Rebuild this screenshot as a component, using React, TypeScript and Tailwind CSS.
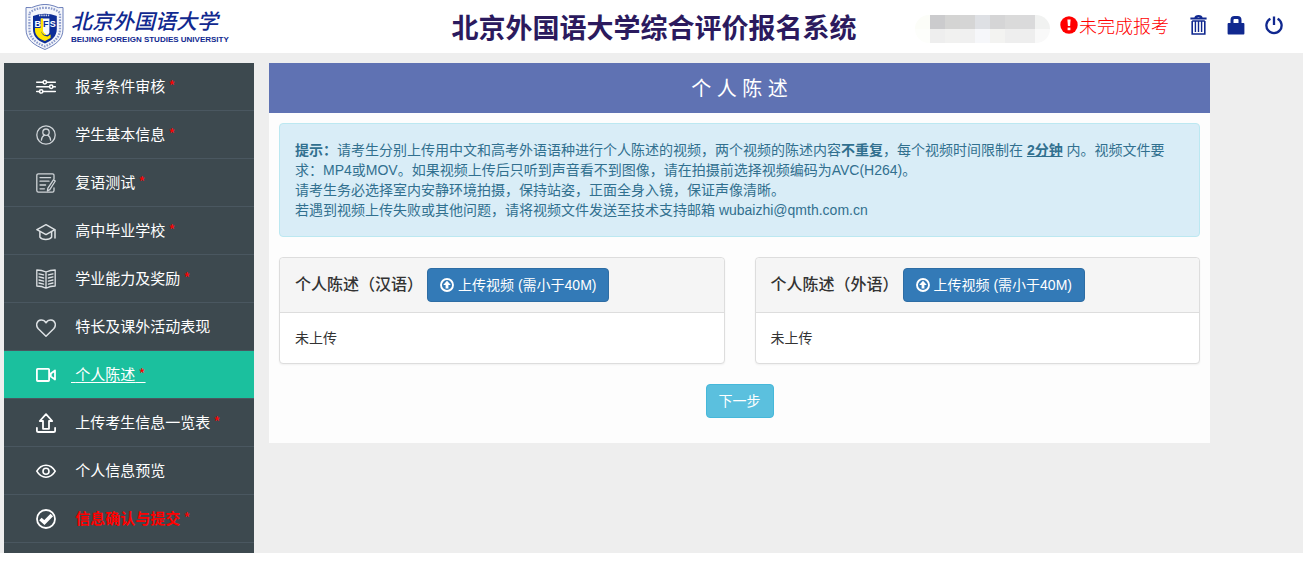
import type { ReactNode } from 'react'

interface MenuItem {
  label: string
  icon: ReactNode
  required?: boolean
  active?: boolean
  warn?: boolean
}

function MenuIcon({ children, width = 1.4, color = '#e3e6e8' }: { children: ReactNode; width?: number; color?: string }) {
  return (
    <svg
      width="20"
      height="20"
      viewBox="0 0 20 20"
      fill="none"
      stroke={color}
      strokeWidth={width}
      strokeLinecap="round"
      strokeLinejoin="round"
      className="shrink-0"
      aria-hidden="true"
    >
      {children}
    </svg>
  )
}

const menu: MenuItem[] = [
  {
    label: '报考条件审核',
    required: true,
    icon: (
      <MenuIcon width={1.5} color="#ffffff">
        <path d="M0.7 5.2H7M10.6 5.2H19.3M0.7 9.8H13.5M17 9.8H19.3M0.7 14.4H3.5M7 14.4H19.3" />
        <circle cx="8.8" cy="5.2" r="1.7" />
        <circle cx="15.2" cy="9.8" r="1.7" />
        <circle cx="5.2" cy="14.4" r="1.7" />
      </MenuIcon>
    ),
  },
  {
    label: '学生基本信息',
    required: true,
    icon: (
      <MenuIcon width={1.3} color="#cfd4d8">
        <circle cx="10" cy="10" r="9.2" />
        <circle cx="10" cy="7.2" r="3.2" />
        <path d="M5.4 15.2C5.6 12.4 7.2 10.8 8.4 10.2M14.6 15.2C14.4 12.4 12.8 10.8 11.6 10.2" />
      </MenuIcon>
    ),
  },
  {
    label: '复语测试',
    required: true,
    icon: (
      <MenuIcon width={1.3} color="#cfd4d8">
        <path d="M18 6V2.5Q18 0.9 16.4 0.9H2.4Q0.8 0.9 0.8 2.5V17.4Q0.8 19.1 2.4 19.1H16.4Q18 19.1 18 17.4V15" />
        <path d="M4 4.6H14.6M4 8.2H13M4 12H9.6M4 15.8H8.4" />
        <path d="M17.4 6.8L19.3 8L13.8 16.6L11.4 18L11.8 15.4Z" />
      </MenuIcon>
    ),
  },
  {
    label: '高中毕业学校',
    required: true,
    icon: (
      <MenuIcon width={1.5} color="#dde1e4">
        <path d="M10 3.7L0.9 8.7L10 13.6L18.8 8.7Z" />
        <path d="M3.9 10.8V16.2C6 19.4 13.6 19.4 15.6 16.2V10.8M19 9V17" />
      </MenuIcon>
    ),
  },
  {
    label: '学业能力及奖励',
    required: true,
    icon: (
      <MenuIcon width={1.3} color="#dde1e4">
        <path d="M10 3C7 1.6 3.6 1 0.8 1V17C4 17 7 17.6 10 19.2C13 17.6 16 17 19.2 17V1C16.4 1 13 1.6 10 3ZM10 3V19" />
        <path d="M3 4.8L7.6 5.9M3 7.9L7.6 9M3 11L7.6 12.1M3 14L7.6 15.1M17 4.8L12.4 5.9M17 7.9L12.4 9M17 11L12.4 12.1M17 14L12.4 15.1" />
      </MenuIcon>
    ),
  },
  {
    label: '特长及课外活动表现',
    icon: (
      <MenuIcon width={1.5} color="#dde1e4">
        <path d="M10 19.2L2.3 11.8C-0.8 8.2 0.8 3.4 5 3.1C7.4 3 9 4.2 10 5.8C11 4.2 12.6 3 15 3.1C19.2 3.4 20.8 8.2 17.7 11.8Z" />
      </MenuIcon>
    ),
  },
  {
    label: '个人陈述',
    required: true,
    active: true,
    icon: (
      <MenuIcon width={1.8} color="#ffffff">
        <rect x="0.9" y="3.8" width="12.2" height="12.2" rx="0.8" />
        <path d="M19 5.4L14.8 8.4V11.6L19 14.6Z" />
      </MenuIcon>
    ),
  },
  {
    label: '上传考生信息一览表',
    required: true,
    icon: (
      <MenuIcon width={1.8} color="#ffffff">
        <path d="M10 1.2L3.8 8H7V15.8H13V8H16.2ZM0.9 14.8V17.4Q0.9 19 2.5 19H17.5Q19.1 19 19.1 17.4V14.8" />
      </MenuIcon>
    ),
  },
  {
    label: '个人信息预览',
    icon: (
      <MenuIcon width={1.6} color="#ffffff">
        <path d="M0.8 10.2C5.4 2.2 14.6 2.2 19.2 10.2C14.6 18.2 5.4 18.2 0.8 10.2Z" />
        <circle cx="10" cy="10.2" r="3" />
      </MenuIcon>
    ),
  },
  {
    label: '信息确认与提交',
    required: true,
    warn: true,
    icon: (
      <MenuIcon width={1.8} color="#ffffff">
        <circle cx="10" cy="10" r="9" />
        <path strokeWidth="3.6" strokeLinecap="butt" strokeLinejoin="miter" d="M4.4 10L8.4 13.6L15.8 6" />
      </MenuIcon>
    ),
  },
]

function Crest() {
  return (
    <svg width="40" height="46" viewBox="0 0 40 46" className="shrink-0" aria-hidden="true">
      <path d="M1 3.5Q7 4.5 11 2Q16 0.4 20 0.4Q24 0.4 29 2Q33 4.5 38 3.5V25C38 36 30 41 20 45.5C9 41 1 36 1 25Z" fill="#f4f6fb" stroke="#6d80bb" strokeWidth="1" />
      <path d="M4.4 9Q10 4 20 3.8Q30 4 35 9V25C35 34 28 39 20 42.4C11 39 4.4 34 4.4 25Z" fill="none" stroke="#8c9bcb" strokeWidth="2.2" strokeDasharray="1.6 1.2" />
      <path d="M8 12Q20 7.6 31.8 12V25C31.8 32 27 36.6 20 39.4C12 36.6 8 32 8 25Z" fill="#0c2d97" />
      <path d="M14 11.4H25" stroke="#c9d1e8" strokeWidth="1.6" strokeDasharray="1.4 0.8" />
      <path d="M10 24H16V27Q17 32 22.6 32.6L25.6 30.4V34L20 37C13 34.6 10 30.6 10 26Z" fill="#ffe600" />
      <path d="M15.8 14.4H24.4V28.4Q24 31 21.4 31Q16.6 30 15.8 25Z" fill="#f6f8fc" />
      <path d="M15.8 14.4H18V27Q18.6 29.4 21 30.2L20.4 31.2Q16.4 30 15.8 26Z" fill="#ffe600" />
      <text x="9.6" y="23.4" fontFamily="Liberation Sans, Arial, sans-serif" fontSize="9" fontWeight="700" fill="#ffffff">B</text>
      <text x="18" y="23.4" fontFamily="Liberation Sans, Arial, sans-serif" fontSize="9" fontWeight="700" fill="#0c2d97">F</text>
      <text x="24.8" y="23.4" fontFamily="Liberation Sans, Arial, sans-serif" fontSize="9" fontWeight="700" fill="#ffffff">S</text>
    </svg>
  )
}

// mosaic tiles that cover the account name
const maskTop = ['bg-[#fcfdf8]', 'bg-[#cbcbcd]', 'bg-[#d4d4d3]', 'bg-[#d5d5d5]', 'bg-[#dee0e4]', 'bg-[#d5d5d6]', 'bg-[#dadada]', 'bg-[#dadadb]', 'bg-[#f1f2f1]']
const maskBottom = ['bg-[#fdfefb]', 'bg-[#eeeeee]', 'bg-[#f1f1f0]', 'bg-[#f0f0f0]', 'bg-[#f6f7fa]', 'bg-[#f3f3f1]', 'bg-[#eeeeee]', 'bg-[#eeeeee]', 'bg-[#f9f9f9]']

function AccountMask() {
  return (
    <div className="grid grid-cols-9 w-[135px] h-[28px] mt-1 rounded-full overflow-hidden" aria-hidden="true">
      {[...maskTop, ...maskBottom].map((tone, i) => (
        <span key={i} className={tone} />
      ))}
    </div>
  )
}

function Header() {
  return (
    <header className="flex items-center h-[53px] bg-white pl-[14px] pr-5">
      <a href="#" className="flex flex-1 items-center gap-[6px] pl-[11px] text-[#10288f]">
        <Crest />
        <span className="flex flex-col">
          <span className="text-[21px] leading-[26px] italic font-medium whitespace-nowrap">北京外国语大学</span>
          <span className="text-[8px] leading-[10px] font-bold whitespace-nowrap">BEIJING FOREIGN STUDIES UNIVERSITY</span>
        </span>
      </a>
      <h1 className="pt-1 text-[27px] leading-[40px] font-bold text-[#2b1a5e] whitespace-nowrap">北京外国语大学综合评价报名系统</h1>
      <div className="flex flex-1 items-center justify-end">
        <AccountMask />
        <span className="ml-[10px] flex items-center gap-px text-[18px] leading-[24px] font-light text-[#ff0000] whitespace-nowrap">
          <svg width="18" height="18" viewBox="0 0 18 18" className="mb-1" aria-hidden="true">
            <circle cx="9" cy="9" r="8.7" fill="#ff0000" />
            <path d="M7.4 3.4H10.6L10.1 10H7.9Z" fill="#ffffff" />
            <rect x="7.6" y="11.6" width="2.8" height="2.6" fill="#ffffff" />
          </svg>
          未完成报考
        </span>
        <div className="ml-[21px] flex items-center gap-5 pb-1">
          <button type="button" aria-label="删除">
            <svg width="17" height="20" viewBox="0 0 17 20" fill="none" stroke="#10288f" aria-hidden="true">
              <path strokeWidth="2" d="M0.4 3.6H16.6M5.2 3.4Q5.6 1 8.5 1Q11.4 1 11.8 3.4" />
              <path strokeWidth="1.6" d="M2.2 6V19H14.8V6" />
              <path strokeWidth="1.4" d="M5.4 6V17M8.5 6V17M11.6 6V17M2.2 6H14.8" />
            </svg>
          </button>
          <button type="button" aria-label="修改密码">
            <svg width="18" height="20" viewBox="0 0 18 20" aria-hidden="true">
              <path d="M5 10V5Q5 2.4 7.4 2.4H10.6Q13 2.4 13 5V10" fill="none" stroke="#10288f" strokeWidth="3" />
              <path d="M1.4 8H16.6Q17.4 8 17.4 9V18.4Q17.4 19.4 16.6 19.4H1.4Q0.6 19.4 0.6 18.4V9Q0.6 8 1.4 8Z" fill="#10288f" />
            </svg>
          </button>
          <button type="button" aria-label="退出">
            <svg width="18" height="20" viewBox="0 0 18 20" fill="none" stroke="#10288f" strokeWidth="2.3" aria-hidden="true">
              <path d="M5.4 3.8A7.6 7.6 0 1 0 12.6 3.8M9 1.4V10" />
            </svg>
          </button>
        </div>
      </div>
    </header>
  )
}

function Sidebar() {
  return (
    <nav className="w-[250px] shrink-0 bg-[#3d494f]">
      <ul>
        {menu.map((item) => (
          <li key={item.label} className={item.active ? 'border-b border-[#4a5760] bg-[#1bc09e]' : 'border-b border-[#4a5760]'}>
            <a
              href="#"
              aria-current={item.active ? 'page' : undefined}
              className="flex items-center h-[47px] pl-8 text-[15px] leading-[20px] text-white whitespace-nowrap"
            >
              {item.icon}
              <span className={item.active ? 'ml-[15px] whitespace-pre underline underline-offset-2' : 'ml-[15px] whitespace-pre'}>
                {' '}
                <span className={item.warn ? 'font-bold text-[#ff0000]' : ''}>{item.label}</span>
                {item.required && <span className="font-['Noto_Sans_CJK_SC',sans-serif] text-[#ff0000]"> *</span>}
              </span>
            </a>
          </li>
        ))}
      </ul>
    </nav>
  )
}

function UploadPanel({ title }: { title: string }) {
  return (
    <section className="flex-1 rounded border border-[#dddddd] bg-white shadow-xs">
      <div className="flex items-center gap-1 h-[55px] px-[15px] rounded-t border-b border-[#dddddd] bg-[#f5f5f5]">
        <h3 className="text-[16px] leading-[20px] font-medium text-[#333333] whitespace-nowrap">{title}</h3>
        <button
          type="button"
          className="flex items-center gap-1 h-[34px] px-3 rounded border border-[#2e6da4] bg-[#337ab7] text-[14px] leading-[20px] text-white whitespace-nowrap"
        >
          <svg width="14" height="14" viewBox="0 0 14 14" aria-hidden="true">
            <circle cx="7" cy="7" r="6" fill="none" stroke="#ffffff" strokeWidth="1.9" />
            <path d="M7 2.8L10.8 7H8.4V10.6H5.6V7H3.2Z" fill="#ffffff" />
          </svg>
          上传视频 (需小于40M)
        </button>
      </div>
      <p className="p-[15px] text-[14px] leading-[20px] text-[#333333]">未上传</p>
    </section>
  )
}

export default function App() {
  return (
    <div className="min-h-screen bg-white font-['Liberation_Sans','Noto_Sans_CJK_SC',sans-serif]">
      <Header />
      <div className="flex gap-[15px] bg-[#eeeeee] pl-1 pr-[93px] pt-[10px] min-h-[500px]">
        <Sidebar />
        <main className="flex-1 self-start bg-[#fdfdfd]">
          <h2 className="bg-[#5f72b3] pt-[2px] text-center text-[20px] leading-[48px] text-white">个 人 陈 述</h2>
          <div className="px-[10px] pt-[10px] pb-[25px]">
            <div className="rounded border border-[#bce8f1] bg-[#d9edf7] px-[15px] py-4 text-[14px] leading-[20px] text-[#31708f]">
              <p>
                <strong>提示：</strong>请考生分别上传用中文和高考外语语种进行个人陈述的视频，两个视频的陈述内容<strong>不重复</strong>，每个视频时间限制在{' '}
                <strong className="underline">2分钟</strong> 内。视频文件要求：MP4或MOV。如果视频上传后只听到声音看不到图像，请在拍摄前选择视频编码为AVC(H264)。
              </p>
              <p>请考生务必选择室内安静环境拍摄，保持站姿，正面全身入镜，保证声像清晰。</p>
              <p>若遇到视频上传失败或其他问题，请将视频文件发送至技术支持邮箱 wubaizhi@qmth.com.cn</p>
            </div>
            <div className="mt-5 flex gap-[30px]">
              <UploadPanel title="个人陈述（汉语）" />
              <UploadPanel title="个人陈述（外语）" />
            </div>
            <div className="mt-5 flex justify-center">
              <button type="button" className="h-[34px] px-3 rounded border border-[#46b8da] bg-[#5bc0de] text-[14px] leading-[20px] text-white">
                下一步
              </button>
            </div>
          </div>
        </main>
      </div>
    </div>
  )
}
